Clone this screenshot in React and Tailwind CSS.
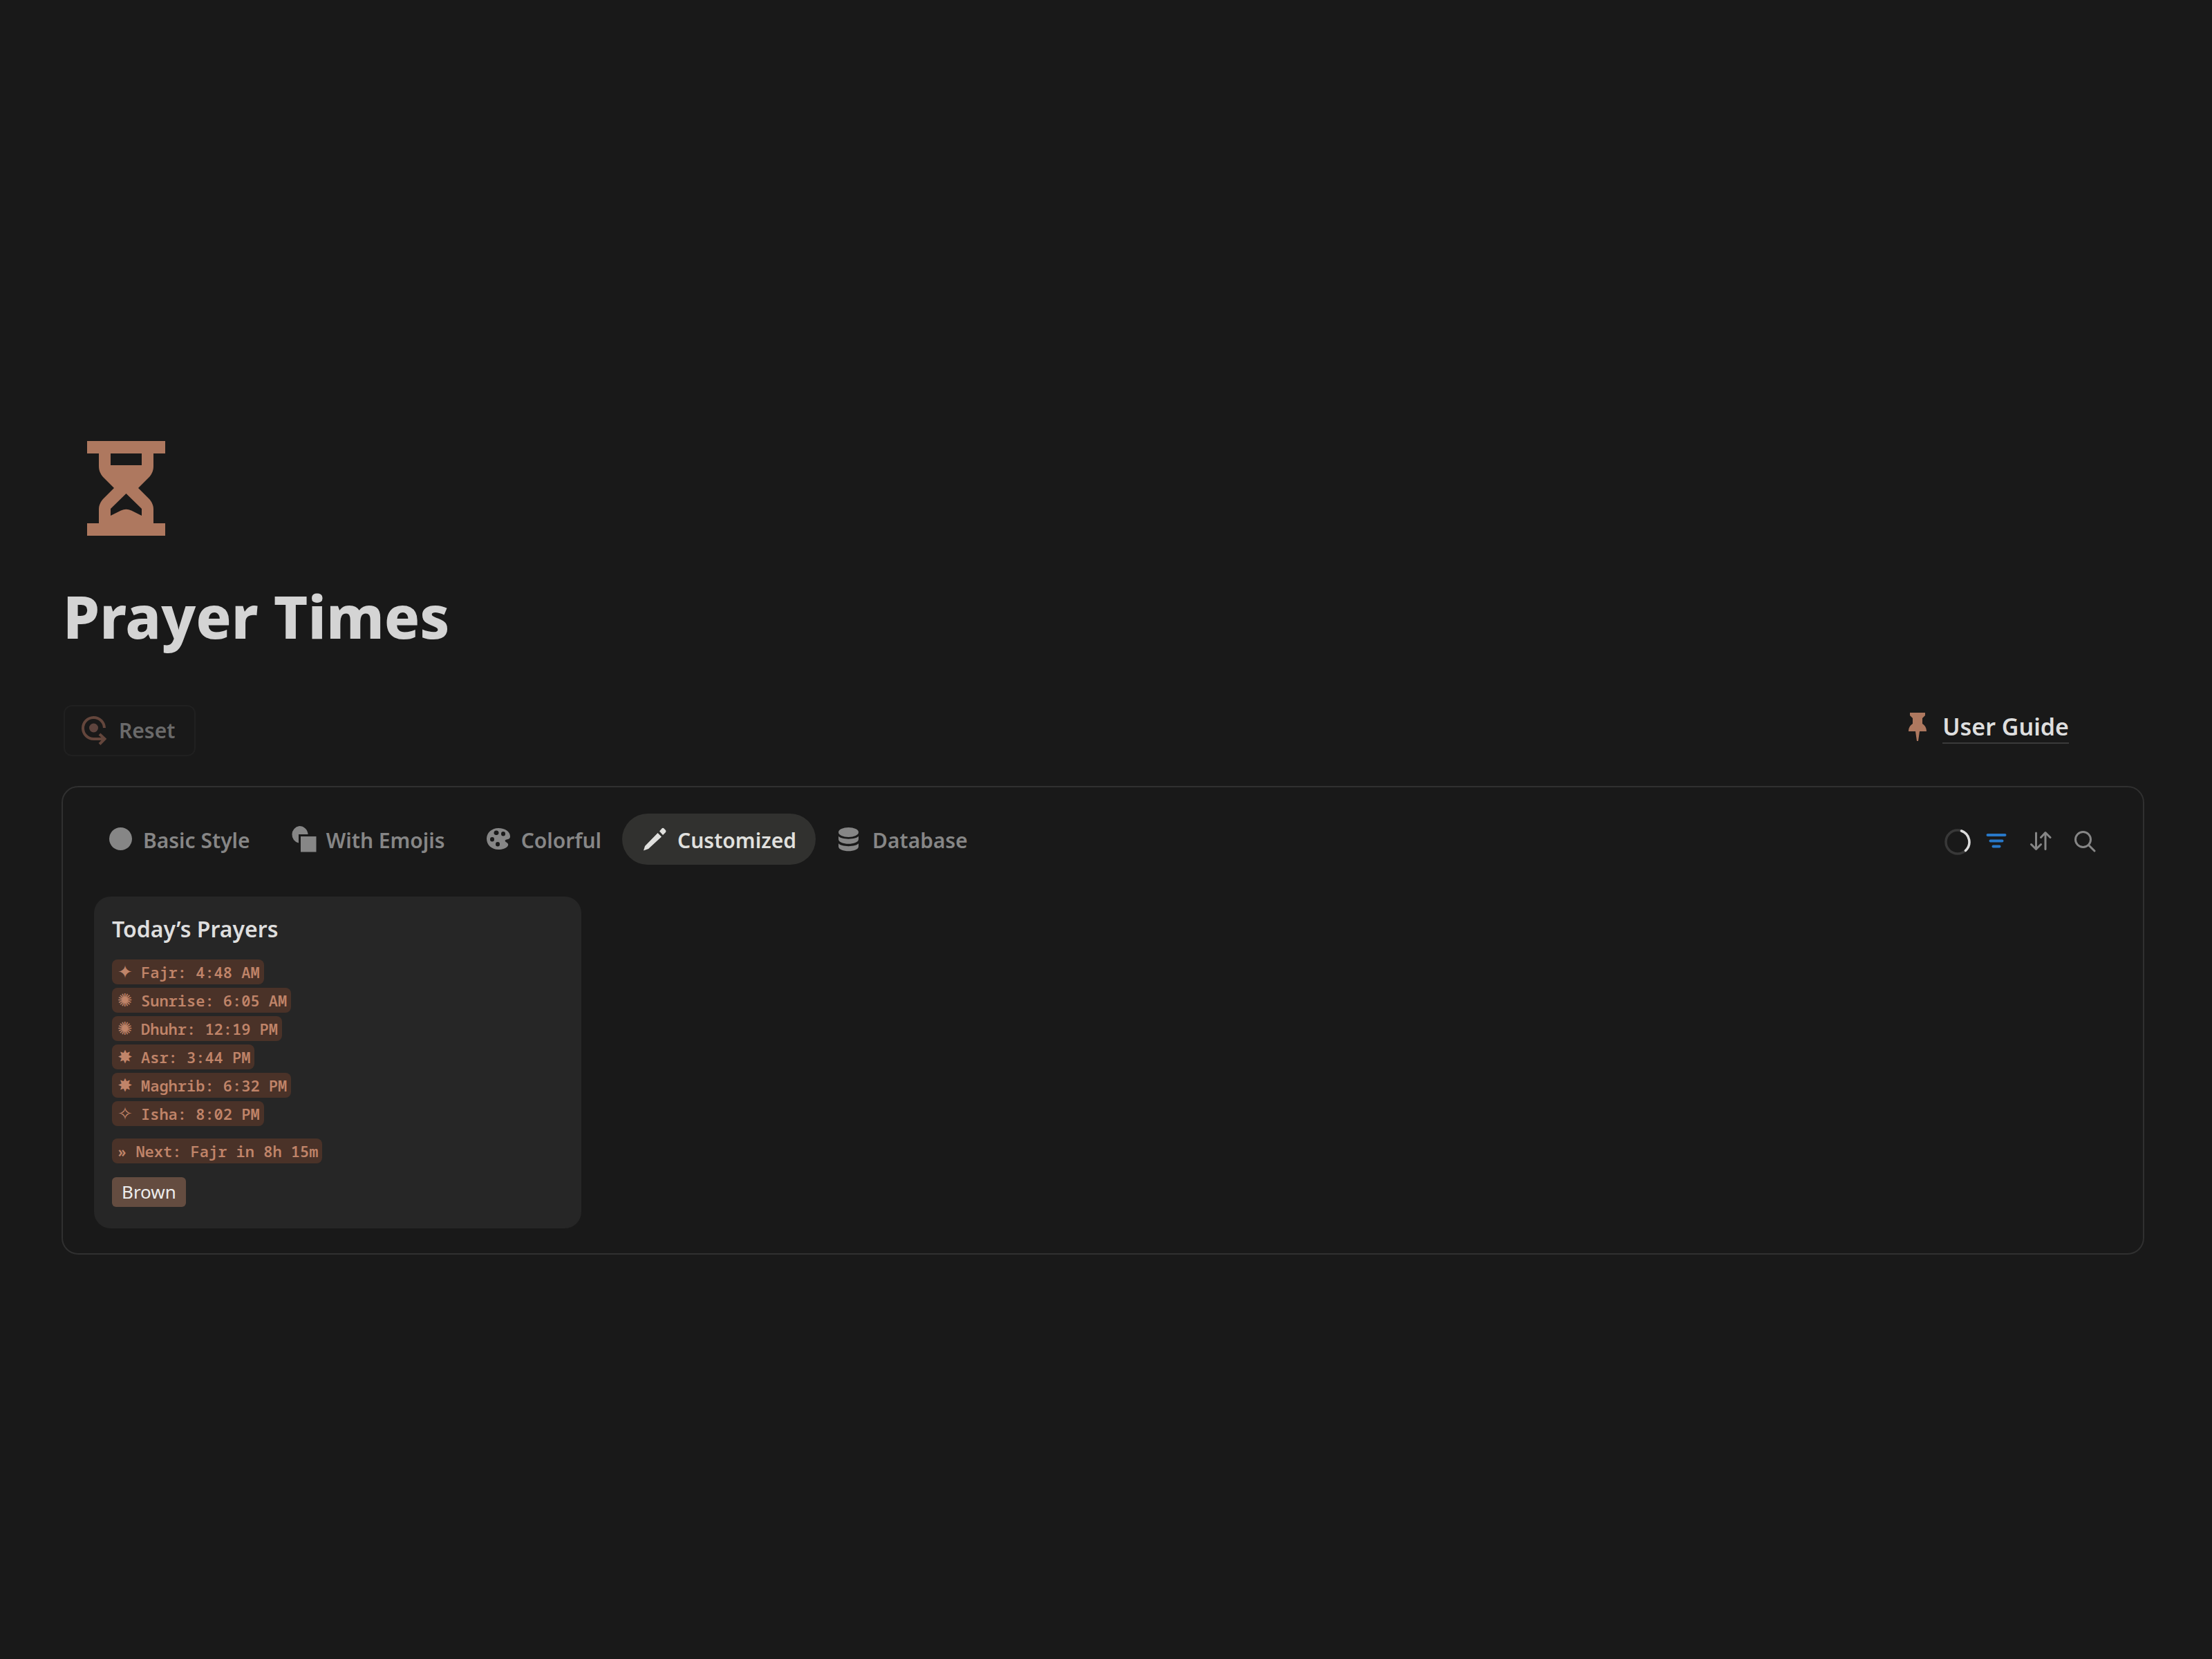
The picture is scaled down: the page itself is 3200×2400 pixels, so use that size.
const prayers = [
  { mark: "✦", text: "Fajr: 4:48 AM" },
  { mark: "✺", text: "Sunrise: 6:05 AM" },
  { mark: "✺", text: "Dhuhr: 12:19 PM" },
  { mark: "✸", text: "Asr: 3:44 PM" },
  { mark: "✸", text: "Maghrib: 6:32 PM" },
  { mark: "✧", text: "Isha: 8:02 PM" },
];

function HourglassIcon() {
  return (
    <svg viewBox="0 0 113 137" className="h-[137px] w-[113px] fill-[#ae785f]" aria-hidden="true">
      <path
        fillRule="evenodd"
        d="M0 0H113V18H96V36C96 43 94 47 90 52L74 68L90 84C94 89 96 93 96 99V119H113V137H0V119H17V99C17 93 19 89 23 84L39 68L23 52C19 47 17 43 17 36V18H0ZM34 18V35H79V18ZM56.500 76L34 98V108L49 100.500Q56.500 97 64 100.500L79 108V98Z"
      />
    </svg>
  );
}

function ResetIcon() {
  return (
    <svg viewBox="0 0 36 44" className="h-11 w-9" fill="none" aria-hidden="true">
      <path d="M33 18A15.500 15.500 0 1 0 17.500 34H33M26 27L33.500 34L26 41.500" stroke="#64463c" strokeWidth="4" />
      <circle cx="17.500" cy="18" r="6.500" fill="#5e443e" />
    </svg>
  );
}

function PinIcon() {
  return (
    <svg viewBox="0 0 28 44" className="h-11 w-7 fill-[#ae785f]" aria-hidden="true">
      <path d="M3 1H25V5L21 9V17C24 19 27 22 27 28H17L15 42H13L11 28H1C1 22 4 19 7 17V9L3 5Z" />
    </svg>
  );
}

const tabIcons = {
  circle: <circle cx="19.500" cy="17.500" r="16.500" />,
  shapes: (
    <>
      <path d="M13 -1A12.500 12.500 0 0 1 25.500 11H12V23.500A12.500 12.500 0 0 1 13 -1Z" />
      <rect x="15" y="14" width="22.500" height="22.500" />
    </>
  ),
  palette: (
    <path
      fillRule="evenodd"
      d="M19 2C9 2 2 9 2 17.500S9 33 19 33C25 33 30 31.500 32.500 28C34 25.500 33 24 30.500 22.500C28 21 28 19 31 18.500C34 18 36 17 36 14C36 7 29 2 19 2ZM16 5.500A3 3.300 0 1 1 16 12A3 3.300 0 1 1 16 5.500ZM26 7A3 3.300 0 1 1 26 13.600A3 3.300 0 1 1 26 7ZM10 15A3 3.300 0 1 1 10 21.600A3 3.300 0 1 1 10 15ZM18 22A3 3.300 0 1 1 18 28.600A3 3.300 0 1 1 18 22Z"
    />
  ),
  pencil: <path d="M3 34.500L5 28L23.500 9L29 14.500L10 32ZM26 6.500L29.500 2.500Q31 1 32.500 2.500L35 5Q36 6.500 35 8L31 12Z" />,
  database: (
    <>
      <ellipse cx="17.500" cy="8" rx="14.500" ry="7" />
      <path d="M3 13.500C6 19 29 19 32 13.500V18C32 27 3 27 3 18ZM3 24C6 29.500 29 29.500 32 24V28.500C32 37.500 3 37.500 3 28.500Z" />
    </>
  ),
};

const tabs = [
  { icon: "circle", label: "Basic Style" },
  { icon: "shapes", label: "With Emojis" },
  { icon: "palette", label: "Colorful" },
  { icon: "pencil", label: "Customized", active: true },
  { icon: "database", label: "Database" },
];

function Tab({ icon, label, active }) {
  return (
    <button
      type="button"
      role="tab"
      aria-selected={!!active}
      className={
        active
          ? "flex h-[74px] items-center gap-4 rounded-full bg-[#31312f] px-7 text-[#e0e0de]"
          : "flex h-[74px] items-center gap-4 rounded-full px-7 text-[#868686]"
      }
    >
      <svg viewBox="0 0 36 36" className="size-9 overflow-visible fill-current" aria-hidden="true">
        {tabIcons[icon]}
      </svg>
      <span className="pt-1 text-[30px] leading-10 font-semibold">{label}</span>
    </button>
  );
}

const chip = "flex h-9 w-fit items-center rounded-lg bg-[#4a3228] pr-1.5 pl-2 text-[22px] leading-9 font-semibold text-[#c08469]";
const mono = "font-['Noto_Sans_Mono','DejaVu_Sans_Mono',monospace]";

export default function App() {
  return (
    <main className="min-h-screen bg-[#191919] pt-[638px] pr-[98px] pb-20 pl-[89px] font-['Noto_Sans','Open_Sans',sans-serif]">
      <div className="pl-[37px]">
        <HourglassIcon />
      </div>
      <h1 className="mt-16 pl-0.5 text-[85px] leading-[104px] font-extrabold text-[#d4d4d4]">Prayer Times</h1>

      <div className="mt-[77px] flex items-start justify-between pr-[109px] pl-[3px]">
        <button
          type="button"
          className="flex h-[74px] items-center gap-[18px] rounded-xl border-2 border-[#202020] pr-7 pl-6 text-[30px] leading-10 font-semibold text-[#6a6a6a]"
        >
          <ResetIcon />
          Reset
        </button>
        <a href="#guide" className="mt-2 flex items-center gap-[22px] text-[#dedede]">
          <PinIcon />
          <span className="border-b-2 border-[#3a3a3a] text-[34px] leading-[46px] font-semibold">User Guide</span>
        </a>
      </div>

      <section className="mt-[43px] rounded-3xl border-2 border-[#303030] px-[45px] pt-[38px] pb-9">
        <div className="flex items-center justify-between pr-[23px]">
          <div role="tablist" className="-ml-[9px] flex gap-0.5">
            {tabs.map((tab) => (
              <Tab key={tab.label} {...tab} />
            ))}
          </div>
          <div className="flex items-center pt-2 text-[#868686]">
            <svg viewBox="0 0 40 40" className="mr-5 size-10" fill="none" strokeWidth="3.500" role="status" aria-label="Loading">
              <circle cx="20" cy="20" r="17" stroke="#383838" />
              <path d="M25.500 4A17 17 0 0 1 31.500 32.500" stroke="#dcdcdc" strokeLinecap="round" />
            </svg>
            <button type="button" aria-label="Filter">
              <svg viewBox="0 0 32 32" className="mr-8 size-8" fill="none" stroke="#2878c8" strokeWidth="4" strokeLinecap="round" aria-hidden="true">
                <path d="M3.500 6H28.500M7.500 14.500H24.500M11.500 22.500H20.500" />
              </svg>
            </button>
            <button type="button" aria-label="Sort">
              <svg viewBox="0 0 32 32" className="mr-8 size-8" fill="none" stroke="currentColor" strokeWidth="3" strokeLinecap="round" strokeLinejoin="round" aria-hidden="true">
                <path d="M9.500 3V26M2.500 19.500L9.500 26.500L16.500 19.500M23 26.500V3M16.500 9.500L23 2.500L30 9.500" />
              </svg>
            </button>
            <button type="button" aria-label="Search">
              <svg viewBox="0 0 32 32" className="size-8" fill="none" stroke="currentColor" strokeWidth="3" strokeLinecap="round" aria-hidden="true">
                <circle cx="13.500" cy="12.500" r="11" />
                <path d="M21.500 20.500L30 29" />
              </svg>
            </button>
          </div>
        </div>

        <article className="mt-[46px] w-full max-w-[705px] rounded-3xl bg-[#262626] px-[26px] pt-[25px] pb-[31px]">
          <h2 className="text-[32px] leading-11 font-semibold text-[#dedede]">Today’s Prayers</h2>
          <ul className={`mt-[22px] flex flex-col gap-[5px] ${mono}`}>
            {prayers.map(({ mark, text }) => (
              <li key={text} className={chip}>
                <span className="w-[34px] font-['DejaVu_Sans',sans-serif] text-[26px] font-normal">{mark}</span>
                {text}
              </li>
            ))}
          </ul>
          <p className={`mt-[18px] ${mono} ${chip}`}>» Next: Fajr in 8h 15m</p>
          <span className="mt-5 block h-[43px] w-fit rounded-md bg-[#644c40] px-3.5 text-[26px] leading-[42px] text-[#ececec]">Brown</span>
        </article>
      </section>
    </main>
  );
}
